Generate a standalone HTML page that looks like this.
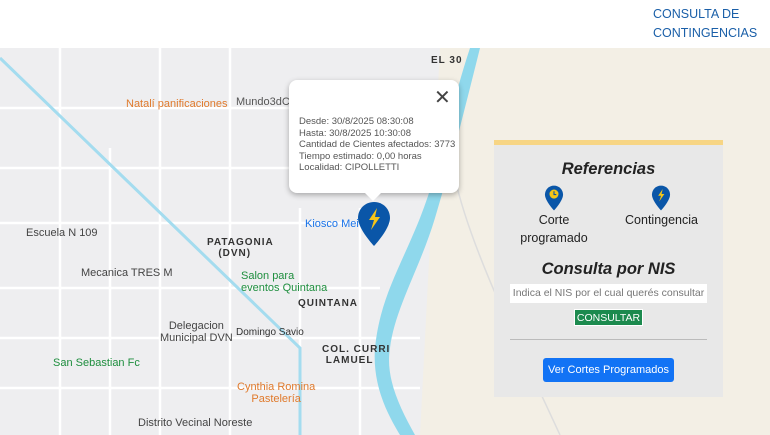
<!DOCTYPE html>
<html><head><style>
*{margin:0;padding:0;box-sizing:border-box}
body{width:770px;height:435px;overflow:hidden;font-family:"Liberation Sans",sans-serif;background:#fff;position:relative}
.hdr{position:absolute;left:0;top:0;width:770px;height:48px;background:#fff}
.hdr a{position:absolute;left:653px;top:5px;color:#1a5fa8;font-size:12.5px;line-height:19px;text-decoration:none}
.map{position:absolute;left:0;top:48px;width:770px;height:387px;background:#eeeef0;overflow:hidden}
.lbl{position:absolute;font-size:11px;white-space:nowrap}
.pop{position:absolute;left:289px;top:80px;width:170px;height:113px;background:#fff;border-radius:8px;box-shadow:0 2px 6px rgba(0,0,0,.3);font-size:9.5px;color:#555;line-height:11.5px;padding:36px 0 0 10px}
.pop:after{content:"";position:absolute;left:76px;bottom:-8px;border-left:8px solid transparent;border-right:8px solid transparent;border-top:8px solid #fff}
.x{position:absolute;left:145px;top:8px;font-size:20px;color:#444;line-height:20px}
.panel{position:absolute;left:494px;top:140px;width:229px;height:257px;background:#e8e8e8;border-top:5px solid #f7d584;text-align:center;color:#222}
h3{font-style:italic;font-weight:bold;font-size:16.5px}
.in{position:absolute;left:16px;top:139px;width:197px;height:19px;background:#fff;font-size:10.5px;color:#777;line-height:19px}
.btn{position:absolute;left:80px;top:164px;width:69px;height:17px;background:#1c8a4e;color:#fff;font-size:10.5px;line-height:17px;border:1px solid #fff}
.hr{position:absolute;left:16px;top:194px;width:197px;height:1px;background:#bbb}
.b2{position:absolute;left:49px;top:213px;width:131px;height:24px;background:#1273f5;border-radius:3px;color:#fff;font-size:11px;line-height:24px}
</style></head><body>
<div class="hdr"><a>CONSULTA DE<br>CONTINGENCIAS</a></div>
<div class="map">
<svg width="770" height="387" style="position:absolute;left:0;top:0">
<path d="M440 0 L770 0 L770 387 L420 387 Z" fill="#f3efe5"/>
<g stroke="#fff" stroke-width="2.5" fill="none">
<path d="M0 60 H420 M0 120 H400 M0 175 H390 M0 240 H380 M0 290 H420 M0 340 H420 M160 0 V387 M230 0 V387 M300 160 V387 M60 0 V387 M110 100 V387 M360 160 V387"/>
</g>
<path d="M0 10 L300 300 L300 387" stroke="#a4dcef" stroke-width="3" fill="none"/>
<path d="M470 0 C450 60 440 120 420 170 C400 220 380 250 375 300 C372 340 390 370 400 387 L415 387 C400 360 385 330 390 300 C395 260 420 220 435 170 C450 120 465 60 480 0Z" fill="#8fd8ec"/>
<path d="M455 130 C470 200 520 300 560 387" stroke="#ddd" stroke-width="1.5" fill="none"/>
</svg>
<div class="lbl" style="left:126px;top:50px;color:#e07a2c">Natalí panificaciones</div>
<div class="lbl" style="left:236px;top:48px;color:#555">Mundo3dCipo</div>
<div class="lbl" style="left:431px;top:7px;color:#333;font-weight:bold;letter-spacing:1px;font-size:10px">EL 30</div>
<div class="lbl" style="left:26px;top:179px;color:#444">Escuela N 109</div>
<div class="lbl" style="left:207px;top:189px;color:#333;font-weight:bold;letter-spacing:1px;font-size:10px">PATAGONIA<br>&nbsp;&nbsp;&nbsp;(DVN)</div>
<div class="lbl" style="left:305px;top:170px;color:#1a73e8">Kiosco Mei</div>
<div class="lbl" style="left:81px;top:219px;color:#444">Mecanica TRES M</div>
<div class="lbl" style="left:241px;top:222px;color:#1e8e3e">Salon para<br>eventos Quintana</div>
<div class="lbl" style="left:298px;top:250px;color:#333;font-weight:bold;letter-spacing:1px;font-size:10px">QUINTANA</div>
<div class="lbl" style="left:160px;top:272px;color:#444;text-align:center">Delegacion<br>Municipal DVN</div>
<div class="lbl" style="left:236px;top:279px;color:#333;font-size:10px">Domingo Savio</div>
<div class="lbl" style="left:322px;top:296px;color:#333;font-weight:bold;letter-spacing:1px;font-size:10px">COL. CURRI<br>&nbsp;LAMUEL</div>
<div class="lbl" style="left:53px;top:309px;color:#1e8e3e">San Sebastian Fc</div>
<div class="lbl" style="left:237px;top:333px;color:#e07a2c;text-align:center">Cynthia Romina<br>Pastelería</div>
<div class="lbl" style="left:138px;top:369px;color:#444">Distrito Vecinal Noreste</div>
</div>
<div class="pop"><span class="x">✕</span>Desde: 30/8/2025 08:30:08<br>Hasta: 30/8/2025 10:30:08<br>Cantidad de Cientes afectados: 3773<br>Tiempo estimado: 0,00 horas<br>Localidad: CIPOLLETTI</div>
<svg style="position:absolute;left:357px;top:201px" width="34" height="46" viewBox="0 0 34 46"><path d="M17 1C8 1 1 8 1 17c0 11 16 28 16 28s16-17 16-28C33 8 26 1 17 1z" fill="#0a56a8"/><path d="M20 7l-8 12h5l-3 10 9-13h-5z" fill="#f5c518"/></svg>
<div class="panel">
<h3 style="margin-top:15px">Referencias</h3>
<svg style="position:absolute;left:50px;top:40px" width="20" height="26" viewBox="0 0 34 46"><path d="M17 1C8 1 1 8 1 17c0 11 16 28 16 28s16-17 16-28C33 8 26 1 17 1z" fill="#0a56a8"/><circle cx="17" cy="16" r="8" fill="#f5c518"/><path d="M17 11v6h4" stroke="#0a56a8" stroke-width="2" fill="none"/></svg>
<svg style="position:absolute;left:157px;top:40px" width="20" height="26" viewBox="0 0 34 46"><path d="M17 1C8 1 1 8 1 17c0 11 16 28 16 28s16-17 16-28C33 8 26 1 17 1z" fill="#0a56a8"/><path d="M20 7l-8 12h5l-3 10 9-13h-5z" fill="#f5c518"/></svg>
<div style="position:absolute;left:15px;top:66px;width:90px;font-size:12.5px;line-height:18px">Corte<br>programado</div>
<div style="position:absolute;left:122px;top:66px;width:91px;font-size:12.5px;line-height:18px">Contingencia</div>
<h3 style="position:absolute;left:0;top:115px;width:229px">Consulta por NIS</h3>
<div class="in">Indica el NIS por el cual querés consultar</div>
<div class="btn">CONSULTAR</div>
<div class="hr"></div>
<div class="b2">Ver Cortes Programados</div>
</div>
</body></html>
